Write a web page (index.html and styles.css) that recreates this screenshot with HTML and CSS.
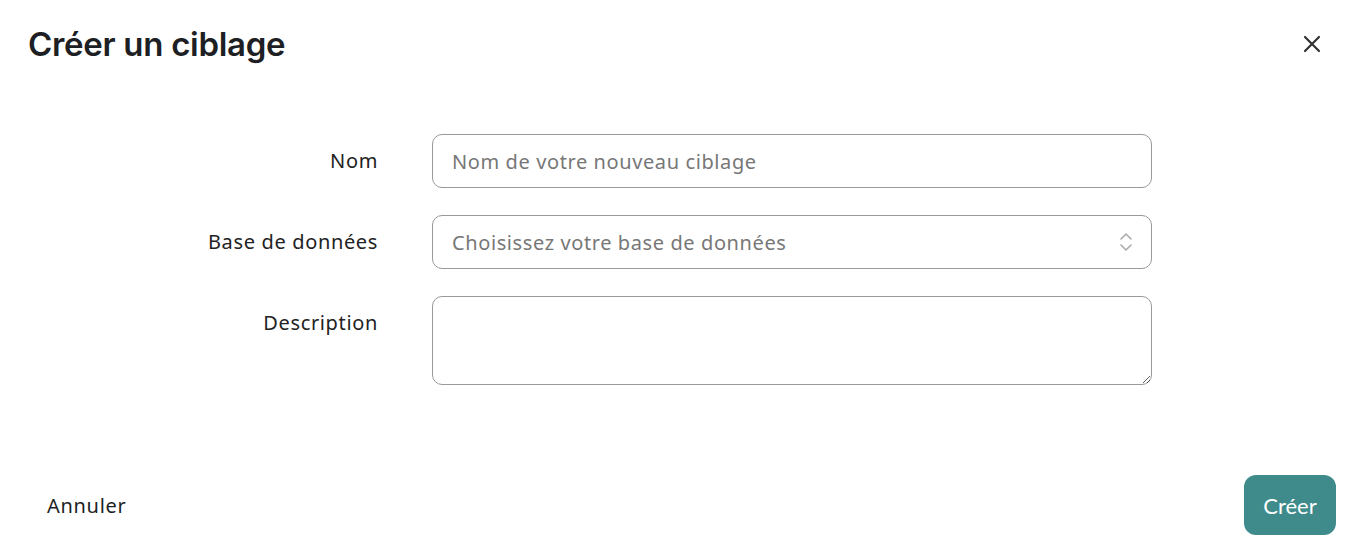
FILE: index.html
```html
<!DOCTYPE html>
<html lang="fr">
<head>
    <meta charset="UTF-8">
    <title>Créer un ciblage</title>
    <link rel="stylesheet" href="styles.css">
</head>
<body>
    <div class="modal">
        <div class="modal-header">
            <h1>Créer un ciblage</h1>
            <button class="close-btn" aria-label="Fermer">
                <svg width="18" height="18" viewBox="0 0 18 18"><path d="M2 2 L16 16 M16 2 L2 16" stroke="#333" stroke-width="2.2" stroke-linecap="round"/></svg>
            </button>
        </div>

        <form class="form">
            <label class="label" for="nom">Nom</label>
            <input class="field" id="nom" type="text" placeholder="Nom de votre nouveau ciblage">

            <label class="label" for="base">Base de données</label>
            <div class="select">
                <span class="select-text">Choisissez votre base de données</span>
                <svg class="select-arrows" width="14" height="22" viewBox="0 0 14 22"><path d="M2 8 L7 3 L12 8 M2 14 L7 19 L12 14" fill="none" stroke="#aaa" stroke-width="1.6" stroke-linecap="round" stroke-linejoin="round"/></svg>
            </div>

            <label class="label" for="desc">Description</label>
            <textarea class="field area" id="desc"></textarea>
        </form>

        <div class="modal-footer">
            <button class="btn-cancel">Annuler</button>
            <button class="btn-create">Créer</button>
        </div>
    </div>
</body>
</html>
```

FILE: styles.css
```css
/* General styles */
body {
    margin: 0;
    background: #fff;
    font-family: "Noto Sans", "Open Sans", sans-serif;
    color: #1d1f24;
}

.modal {
    height: 554px;
    display: flex;
    flex-direction: column;
    box-sizing: border-box;
}

.modal-header {
    display: flex;
    justify-content: space-between;
    align-items: center;
    padding: 22px 39px 0 28px;
}

h1 {
    margin: 0;
    font-family: Inter, sans-serif;
    font-size: 33px;
    font-weight: 600;
    letter-spacing: -0.3px;
    line-height: 44px;
}

.close-btn {
    background: none;
    border: none;
    padding: 8px;
    cursor: pointer;
    display: flex;
}

/* Form grid */
.form {
    display: grid;
    grid-template-columns: 378px 720px;
    column-gap: 54px;
    row-gap: 27px;
    margin-top: 68px;
}

.label {
    text-align: right;
    font-size: 20px;
    letter-spacing: 0.65px;
    line-height: 54px;
    color: #222;
}

.field {
    height: 54px;
    box-sizing: border-box;
    border: 1px solid #999;
    border-radius: 10px;
    padding: 0 19px;
    font-family: inherit;
    font-size: 20px;
    letter-spacing: 0.6px;
    color: #333;
    outline: none;
}

.field::placeholder {
    color: #777;
}

.select {
    height: 54px;
    box-sizing: border-box;
    border: 1px solid #999;
    border-radius: 10px;
    padding: 0 18px 0 19px;
    display: flex;
    align-items: center;
    justify-content: space-between;
    font-size: 20px;
    letter-spacing: 0.6px;
    color: #777;
}

.area {
    height: 89px;
    resize: vertical;
}

/* Footer */
.modal-footer {
    margin-top: auto;
    display: flex;
    justify-content: space-between;
    align-items: center;
    padding: 0 32px 19px 32px;
}

.btn-cancel {
    background: none;
    border: none;
    font-family: inherit;
    font-size: 20px;
    letter-spacing: 0.7px;
    color: #1d1f24;
    padding: 10px 15px;
    cursor: pointer;
}

.btn-create {
    background: #3f8b8b;
    color: #fff;
    border: none;
    border-radius: 12px;
    font-family: Lato, sans-serif;
    font-size: 22px;
    width: 92px;
    height: 60px;
    cursor: pointer;
}
```
